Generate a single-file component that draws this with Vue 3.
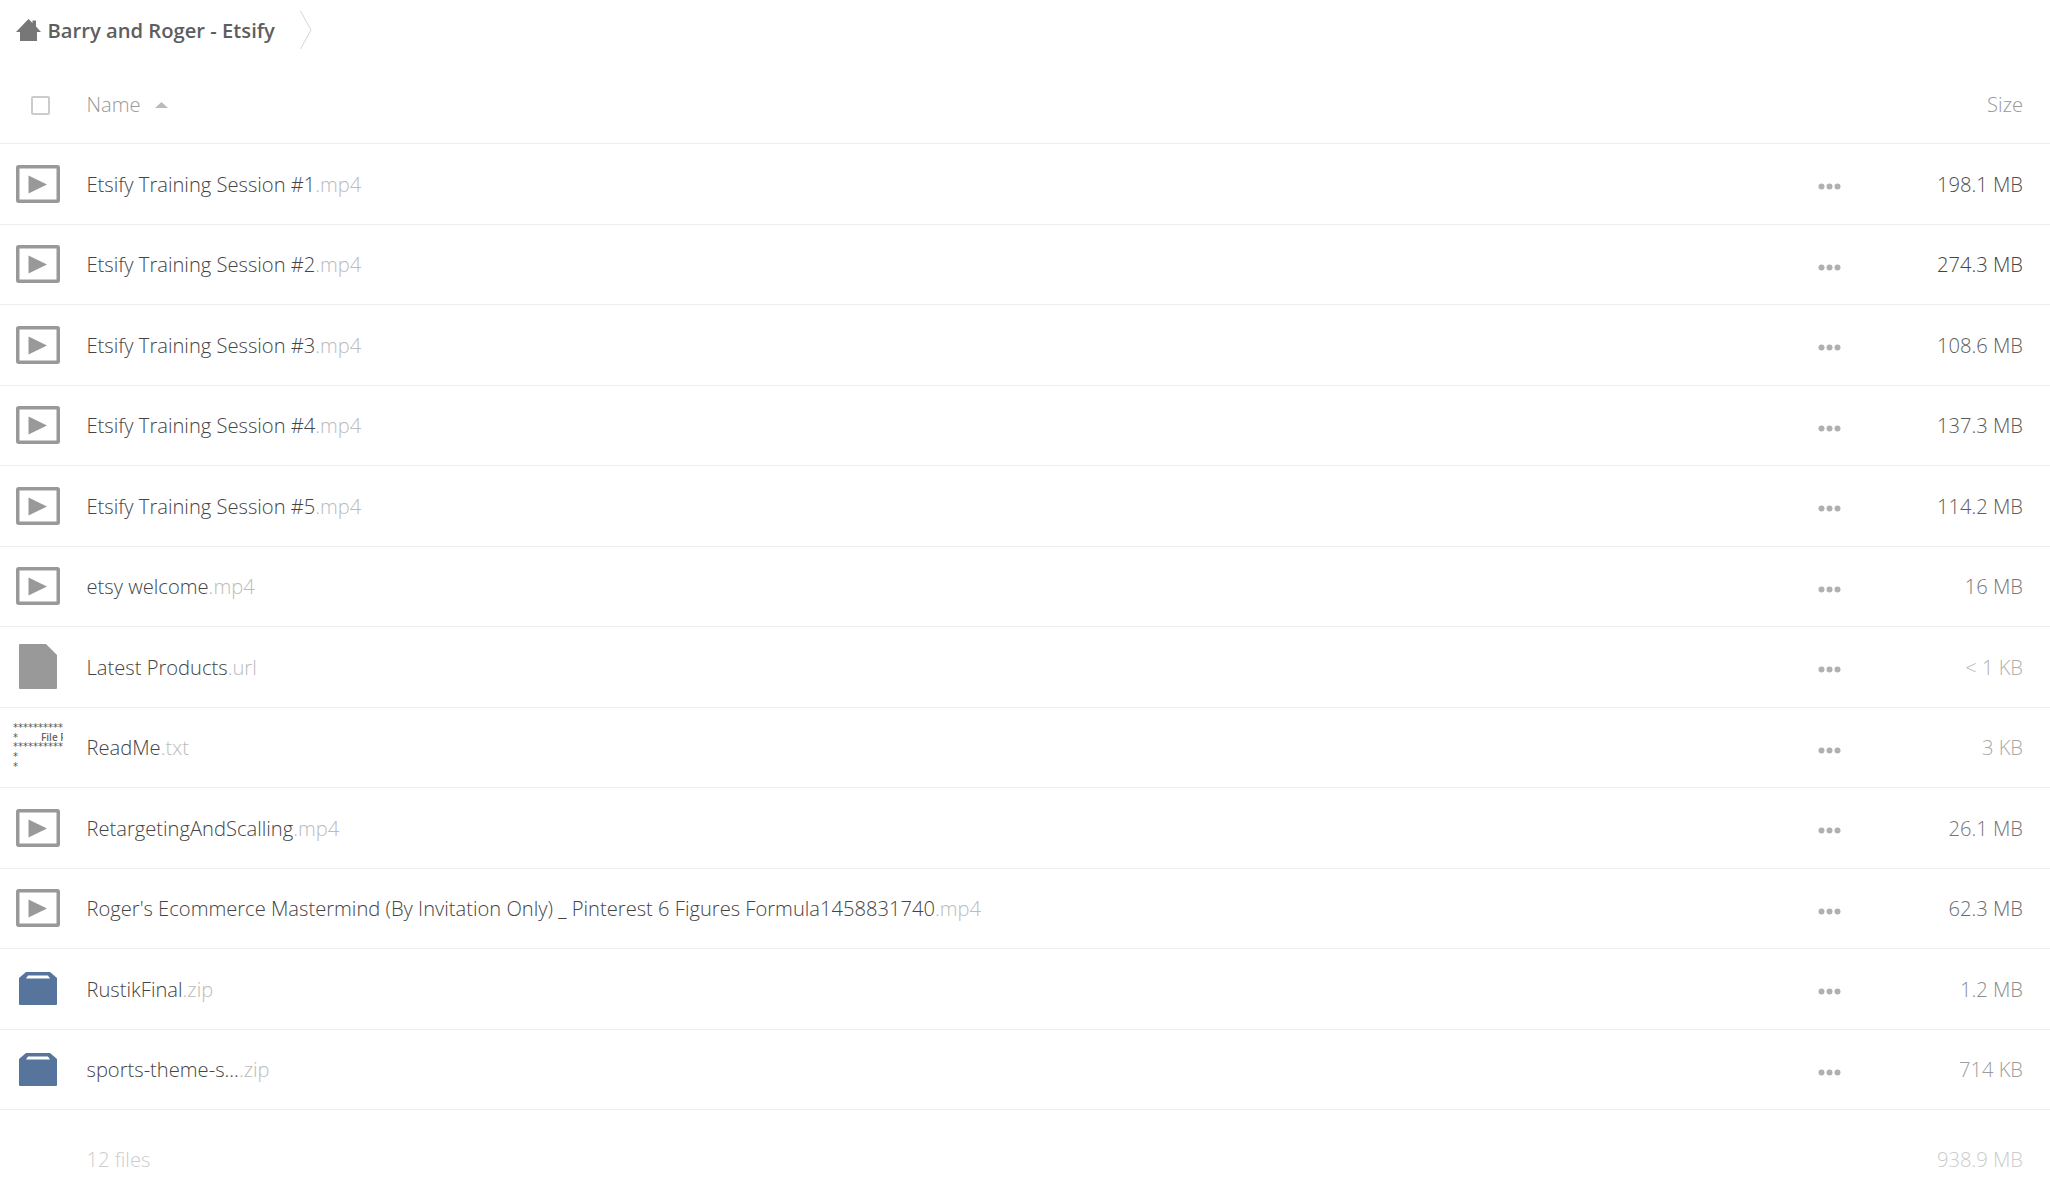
<script setup>
const files = [
  { name: 'Etsify Training Session #1', ext: '.mp4', size: '198.1 MB', type: 'video', color: '#505050' },
  { name: 'Etsify Training Session #2', ext: '.mp4', size: '274.3 MB', type: 'video', color: '#444444' },
  { name: 'Etsify Training Session #3', ext: '.mp4', size: '108.6 MB', type: 'video', color: '#5e5e5e' },
  { name: 'Etsify Training Session #4', ext: '.mp4', size: '137.3 MB', type: 'video', color: '#585858' },
  { name: 'Etsify Training Session #5', ext: '.mp4', size: '114.2 MB', type: 'video', color: '#5c5c5c' },
  { name: 'etsy welcome', ext: '.mp4', size: '16 MB', type: 'video', color: '#787878' },
  { name: 'Latest Products', ext: '.url', size: '< 1 KB', type: 'file', color: '#b0b0b0' },
  { name: 'ReadMe', ext: '.txt', size: '3 KB', type: 'text', color: '#a8a8a8' },
  { name: 'RetargetingAndScalling', ext: '.mp4', size: '26.1 MB', type: 'video', color: '#747474' },
  { name: "Roger's Ecommerce Mastermind (By Invitation Only) _ Pinterest 6 Figures Formula1458831740", ext: '.mp4', size: '62.3 MB', type: 'video', color: '#6a6a6a' },
  { name: 'RustikFinal', ext: '.zip', size: '1.2 MB', type: 'zip', color: '#8c8c8c' },
  { name: 'sports-theme-s...', ext: '.zip', size: '714 KB', type: 'zip', color: '#9c9c9c' },
]
</script>

<template>
  <div class="page">
    <nav class="crumbs">
      <svg class="home" width="25" height="22" viewBox="0 0 25 22">
        <path d="M12.5 0 L16.5 4 V1.5 H20 V7.5 L25 13 H21 V22 H4 V13 H0 Z" fill="#777" />
      </svg>
      <span class="crumb-text">Barry and Roger - Etsify</span>
      <svg class="chevron" width="12" height="38" viewBox="0 0 12 38">
        <path d="M0.5 0 L11 19 L0.5 38" fill="none" stroke="#d5d5d5" stroke-width="1" />
      </svg>
    </nav>

    <div class="head">
      <div class="check-cell"><span class="check"></span></div>
      <div class="head-name">
        <span class="head-label">Name</span>
        <svg width="13" height="6" viewBox="0 0 13 6"><path d="M6.5 0 L13 6 H0 Z" fill="#bbb" /></svg>
      </div>
      <div class="head-size head-label">Size</div>
    </div>

    <div v-for="f in files" :key="f.name + f.ext" class="row">
      <div class="icon-cell">
        <svg v-if="f.type === 'video'" width="44" height="38" viewBox="0 0 44 38">
          <rect x="1.75" y="1.75" width="40.5" height="34.5" rx="1" fill="#fff" stroke="#999" stroke-width="3.5" />
          <path d="M12.5 10.5 L31 19.5 L12.5 28.5 Z" fill="#999" />
        </svg>
        <svg v-else-if="f.type === 'file'" class="file-icon" width="38" height="45" viewBox="0 0 38 45">
          <path d="M1 0 H27 L38 11 V44 A1 1 0 0 1 37 45 H1 A1 1 0 0 1 0 44 V1 A1 1 0 0 1 1 0 Z" fill="#999" />
        </svg>
        <svg v-else-if="f.type === 'zip'" class="file-icon" width="38" height="33" viewBox="0 0 38 33">
          <path d="M7 0 H31 L38 6 V32 A1 1 0 0 1 37 33 H1 A1 1 0 0 1 0 32 V6 Z" fill="#56749c" />
          <path d="M9 3.5 H29 L31 6.5 H7 Z" fill="#fff" />
        </svg>
        <div v-else class="thumb">
          <div>**********</div>
          <div class="thumb-line">*<span class="thumb-title">File F</span></div>
          <div>**********</div>
          <div>*</div>
          <div>*</div>
        </div>
      </div>
      <div class="name"><span class="base">{{ f.name }}</span><span class="ext">{{ f.ext }}</span></div>
      <div class="dots">
        <svg width="23" height="7" viewBox="0 0 23 7">
          <circle cx="3.5" cy="3.5" r="3" fill="#b0b0b0" />
          <circle cx="11.5" cy="3.5" r="3" fill="#b0b0b0" />
          <circle cx="19.5" cy="3.5" r="3" fill="#b0b0b0" />
        </svg>
      </div>
      <div class="size" :style="{ color: f.color }">{{ f.size }}</div>
    </div>

    <div class="foot">
      <span class="foot-name">12 files</span>
      <span class="foot-size">938.9 MB</span>
    </div>
  </div>
</template>

<style>
html, body { margin: 0; background: #fff; }
</style>

<style scoped>
.page {
  width: 2050px;
  height: 1182px;
  overflow: hidden;
  font-family: "Open Sans", "Liberation Sans", sans-serif;
  font-weight: 300;
  font-size: 20.15px;
  color: #444;
  background: #fff;
}
.crumbs {
  height: 60px;
  display: flex;
  align-items: center;
  padding-left: 16px;
  box-sizing: border-box;
}
.crumb-text {
  margin-left: 6.5px;
  font-weight: 600;
  color: #5e5e5e;
  font-size: 20.2px;
}
.chevron { margin-left: 25px; }
.head {
  height: 84px;
  display: flex;
  align-items: center;
  border-bottom: 1px solid #eee;
  box-sizing: border-box;
  padding-top: 7px;
  color: #999;
}
.head-label { position: relative; top: -1px; }
.check-cell { width: 87px; padding-left: 31px; box-sizing: border-box; display: flex; }
.check {
  width: 19px;
  height: 19px;
  border: 2px solid #ccc;
  border-radius: 2px;
  box-sizing: border-box;
}
.head-name { flex: 1; display: flex; align-items: center; gap: 14px; margin-left: -0.5px; }
.head-size { padding-right: 27px; }
.row {
  height: 80.5px;
  display: flex;
  align-items: center;
  border-bottom: 1px solid #eee;
  box-sizing: border-box;
}
.icon-cell {
  width: 86.5px;
  flex: none;
  padding-left: 16px;
  box-sizing: border-box;
  display: flex;
  align-items: center;
}
.file-icon { margin-left: 3px; }
.thumb {
  width: 50px;
  margin-left: -3px;
  overflow: hidden;
  font-family: "DejaVu Sans", sans-serif;
  font-size: 10px;
  line-height: 9.75px;
  font-weight: 400;
  color: #555;
  white-space: nowrap;
}
.thumb-line { display: flex; }
.thumb-title {
  margin-left: 23px;
  font-family: "Open Sans", sans-serif;
  font-size: 10px;
  font-weight: 600;
  color: #666;
}
.name { flex: 1; white-space: nowrap; }
.base { color: #444; }
.ext { color: #bbb; }
.dots { width: 23px; flex: none; display: flex; margin-top: 6px; }
.size { width: 209px; flex: none; text-align: right; padding-right: 27px; box-sizing: border-box; }
.foot {
  display: flex;
  justify-content: space-between;
  padding: 35px 27px 0 86.5px;
  color: #ccc;
}
</style>
